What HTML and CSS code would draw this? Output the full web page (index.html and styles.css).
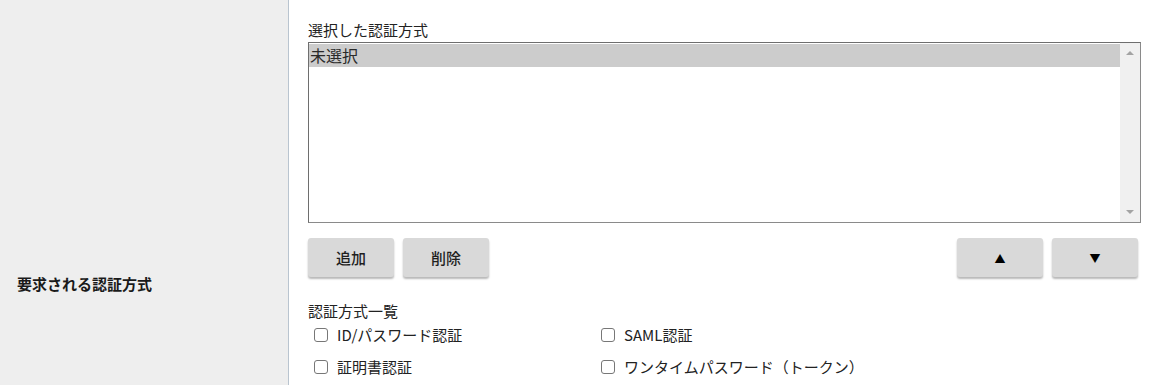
FILE: index.html
```html
<!DOCTYPE html>
<html lang="ja">
<head>
<meta charset="utf-8">
<link rel="stylesheet" href="styles.css">
</head>
<body>
<div class="row">
  <div class="label-cell"><span class="label">要求される認証方式</span></div>
  <div class="field-cell">
    <div class="caption">選択した認証方式</div>
    <div class="listbox">
      <div class="items">
        <div class="item selected">未選択</div>
      </div>
      <div class="scrollbar">
        <span class="arrow up"></span>
        <span class="arrow down"></span>
      </div>
    </div>
    <div class="buttons">
      <button class="btn">追加</button>
      <button class="btn">削除</button>
      <span class="spacer"></span>
      <button class="btn tri">▲</button>
      <button class="btn tri">▼</button>
    </div>
    <div class="caption list-caption">認証方式一覧</div>
    <div class="options">
      <label class="opt"><span class="box"></span>ID/パスワード認証</label>
      <label class="opt"><span class="box"></span>SAML認証</label>
      <label class="opt"><span class="box"></span>証明書認証</label>
      <label class="opt"><span class="box"></span>ワンタイムパスワード（トークン）</label>
    </div>
  </div>
</div>
</body>
</html>
```
FILE: styles.css
```css
html, body {
  margin: 0;
  padding: 0;
  background: #ffffff;
  overflow: hidden;
}
body {
  font-family: "Noto Sans CJK JP", "Noto Sans", sans-serif;
  color: #222222;
  font-size: 15px;
}
.row {
  display: flex;
  min-height: 566px;
}
.label-cell {
  width: 289px;
  flex: 0 0 289px;
  background: #eeeeee;
  border-right: 1px solid #b9c4cf;
  display: flex;
  align-items: center;
  padding-left: 17px;
  box-sizing: border-box;
}
.label {
  font-weight: bold;
  font-size: 15px;
  color: #1a1a1a;
}
.field-cell {
  flex: 1;
  padding: 19px 14px 0 19px;
}
.caption {
  font-size: 15px;
  line-height: 22px;
  color: #222;
}
.listbox {
  display: flex;
  height: 181px;
  box-sizing: border-box;
  border: 1px solid #8a8a8a;
  border-top-color: #6e6e6e;
  border-left-color: #6e6e6e;
  margin-top: 1px;
}
.items {
  flex: 1;
  padding-top: 1px;
}
.item {
  font-size: 16px;
  line-height: 23px;
  height: 23px;
  padding-left: 1px;
  color: #2a2a2a;
}
.item.selected {
  background: #cccccc;
}
.scrollbar {
  width: 20px;
  background: #f0f0f0;
  display: flex;
  flex-direction: column;
  justify-content: space-between;
  align-items: center;
  padding: 8px 0 8px;
}
.arrow {
  width: 0;
  height: 0;
  border-left: 4px solid transparent;
  border-right: 4px solid transparent;
}
.arrow.up {
  border-bottom: 4px solid #a3a3a3;
}
.arrow.down {
  border-top: 4px solid #a3a3a3;
}
.buttons {
  display: flex;
  gap: 9px;
  margin-top: 15px;
  padding-right: 3px;
}
.spacer {
  flex: 1;
}
.btn {
  width: 86px;
  height: 39px;
  border: none;
  border-radius: 3px;
  background: #d9d9d9;
  box-shadow: 0 2px 2px rgba(0, 0, 0, 0.28);
  font-family: "Noto Sans CJK JP", "Noto Sans", sans-serif;
  font-size: 15px;
  font-weight: 500;
  color: #1f1f1f;
  padding: 0;
}
.btn.tri {
  font-size: 11px;
  color: #000;
}
.list-caption {
  margin-top: 23px;
}
.options {
  display: grid;
  grid-template-columns: 287px 1fr;
  row-gap: 10px;
  padding-left: 6px;
  margin-top: 2px;
}
.opt {
  display: flex;
  align-items: center;
  gap: 9px;
  font-size: 15px;
  line-height: 22px;
  color: #222;
}
.box {
  width: 12px;
  height: 12px;
  border: 1px solid #777777;
  border-radius: 3px;
  background: #fff;
  flex: 0 0 auto;
}
```
